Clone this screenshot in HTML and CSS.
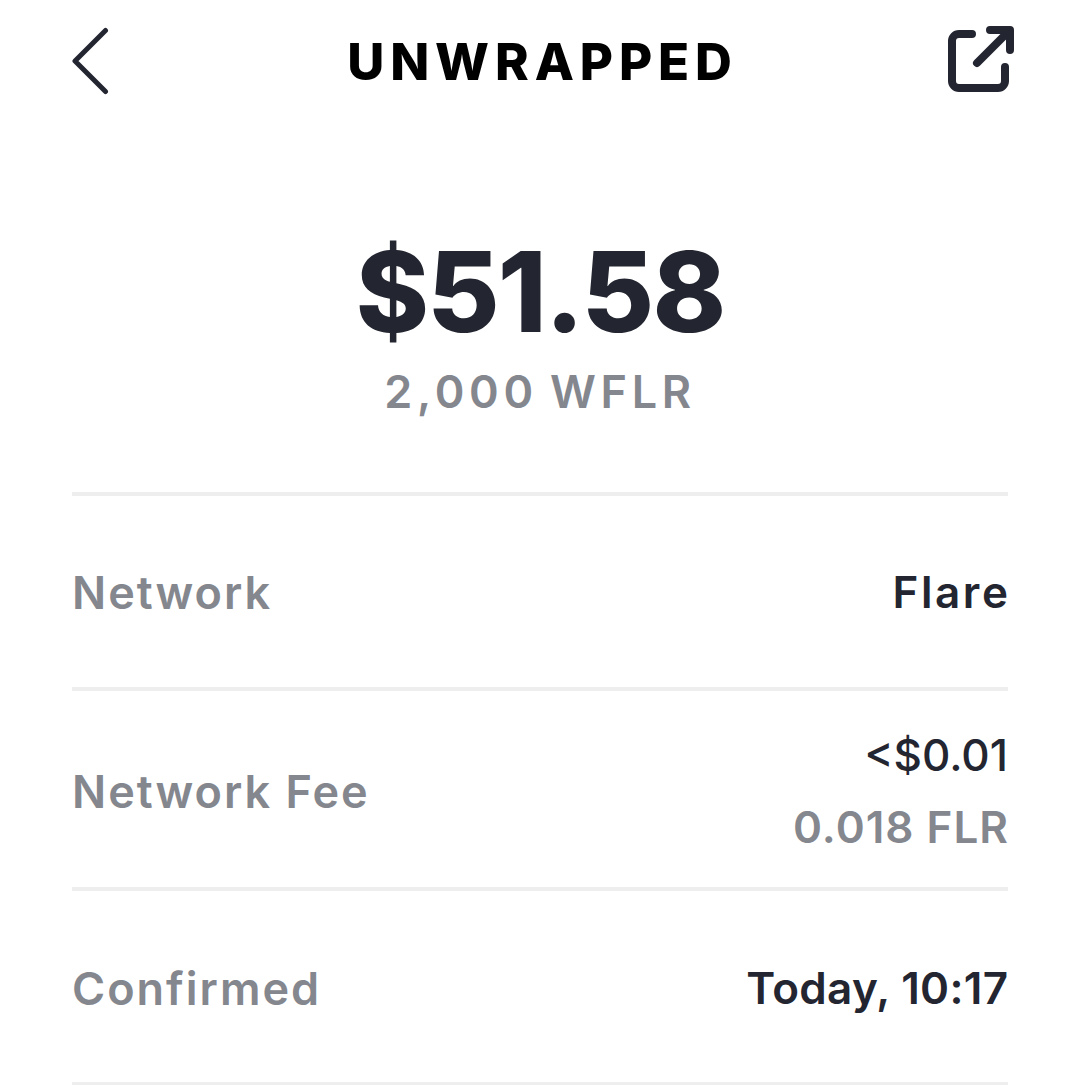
FILE: index.html
```html
<!DOCTYPE html>
<html lang="en">
<head>
<meta charset="utf-8">
<title>Unwrapped</title>
<link rel="stylesheet" href="styles.css">
</head>
<body>
<div class="screen">
  <header class="top">
    <svg class="back" width="38" height="68" viewBox="0 0 38 68" fill="none"><path d="M33.5 3.5 3 34l30.5 30.5" stroke="#232631" stroke-width="5" stroke-linecap="round" stroke-linejoin="round"/></svg>
    <h1 class="title">UNWRAPPED</h1>
    <svg class="share" width="70" height="70" viewBox="0 0 70 70" fill="none"><path d="M26 10H13a7 7 0 0 0-7 7v40a7 7 0 0 0 7 7h39a7 7 0 0 0 7-7V43" stroke="#232631" stroke-width="8" stroke-linecap="round"/><path d="M31 39 62 8M44 6h20v20" stroke="#232631" stroke-width="8" stroke-linecap="round" stroke-linejoin="round"/></svg>
  </header>
  <section class="amount">
    <div class="usd">$51.58</div>
    <div class="token">2,000 WFLR</div>
  </section>
  <section class="rows">
    <div class="row"><span class="label">Network</span><span class="value value-word">Flare</span></div>
    <div class="row row-fee"><span class="label">Network Fee</span><span class="stack"><span class="value value-fee">&lt;$0.01</span><span class="sub">0.018 FLR</span></span></div>
    <div class="row row-last"><span class="label">Confirmed</span><span class="value value-date">Today, 10:17</span></div>
  </section>
</div>
</body>
</html>
```
FILE: styles.css
```css
* { box-sizing: border-box; }
html, body { margin: 0; height: 100%; background: #fff; overflow: hidden; }
.screen { width: 1080px; height: 1085px; padding: 0 72px; font-family: Inter, "Noto Sans", sans-serif; color: #232631; }
.top { height: 122px; display: grid; grid-template-columns: 1fr auto 1fr; align-items: center; }
.share { justify-self: end; margin-right: -8px; margin-top: -4px; }
.title { margin: 0; padding-left: 5px; font-size: 51px; font-weight: 800; letter-spacing: 5.9px; color: #000; line-height: 1; }
.amount { display: flex; flex-direction: column; align-items: center; padding-top: 105px; height: 370px; }
.usd { font-size: 111px; font-weight: 800; line-height: 130px; letter-spacing: -1.8px; }
.token { margin-top: 10px; font-size: 45px; font-weight: 600; line-height: 50px; letter-spacing: 4.7px; word-spacing: -4px; color: #85878e; }
.rows { border-top: 4px solid #eeeeef; }
.row { height: 195px; display: flex; align-items: center; justify-content: space-between; border-bottom: 4px solid #eeeeef; font-size: 44px; font-weight: 600; }
.row-fee { height: 200px; padding-top: 2px; }
.row-last { padding-top: 2px; }
.label { padding-top: 2px; color: #85878e; font-size: 45px; letter-spacing: 2px; font-weight: 560; }
.value-word { letter-spacing: 2.6px; margin-right: -2.6px; }
.value-fee { font-weight: 500; }
.value-date { letter-spacing: 0.3px; margin-right: -0.3px; }
.stack { display: flex; flex-direction: column; align-items: flex-end; gap: 20px; line-height: 52px; padding-top: 2px; }
.sub { color: #85878e; letter-spacing: 1px; margin-right: -1px; }
```
